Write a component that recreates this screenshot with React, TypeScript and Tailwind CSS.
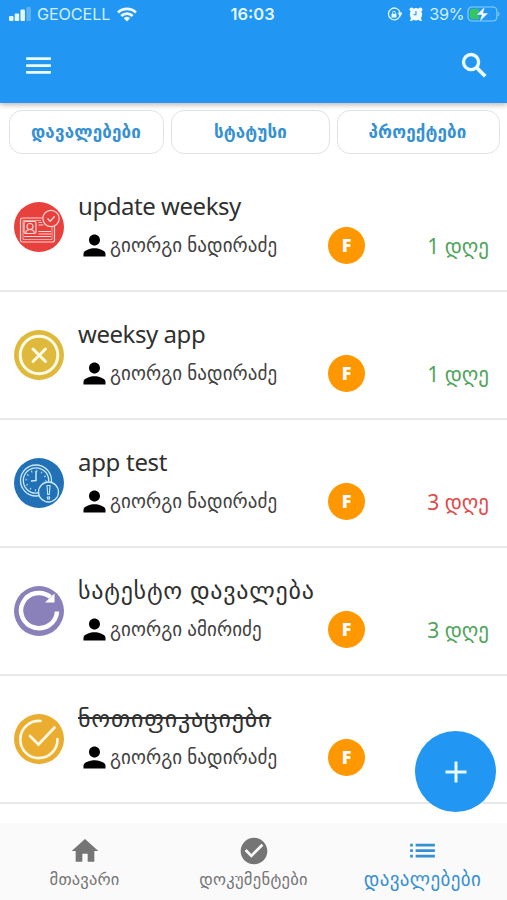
import React from 'react';
import { MdMenu, MdPerson, MdHome, MdCheckCircle, MdList, MdAdd } from 'react-icons/md';
import clsx from 'clsx';

type TaskStatus = 'document' | 'cancelled' | 'overdue' | 'repeat' | 'done';

interface Task {
  id: number;
  title: string;
  titleClass: string;
  user: string;
  days?: string;
  late?: boolean;
  status: TaskStatus;
}

const tasks: Task[] = [
  { id: 1, title: 'update weeksy', titleClass: 'tracking-[-0.45px]', user: 'გიორგი ნადირაძე', days: '1 დღე', status: 'document' },
  { id: 2, title: 'weeksy app', titleClass: 'tracking-[-0.45px]', user: 'გიორგი ნადირაძე', days: '1 დღე', status: 'cancelled' },
  { id: 3, title: 'app test', titleClass: 'tracking-[-0.3px]', user: 'გიორგი ნადირაძე', days: '3 დღე', late: true, status: 'overdue' },
  { id: 4, title: 'სატესტო დავალება', titleClass: 'tracking-[0.75px]', user: 'გიორგი ამირიძე', days: '3 დღე', status: 'repeat' },
  { id: 5, title: 'ნოთიფიკაციები', titleClass: 'tracking-[0.8px] line-through decoration-2', user: 'გიორგი ნადირაძე', status: 'done' },
];

const StatusIcon = ({ status }: { status: TaskStatus }) => {
  switch (status) {
    case 'document':
      return (
        <svg viewBox="0 0 50 50" className="size-[50px]" fill="none" stroke="#ffd5d2" strokeWidth="1.2">
          <circle cx="25" cy="25" r="25" fill="#e8403c" stroke="none" />
          <rect x="6.500" y="16" width="34" height="24" rx="2" />
          <path d="M38 24v13.500H9V18.500h18" strokeWidth=".7" />
          <rect x="10" y="19.500" width="12" height="12" rx="1.500" />
          <circle cx="16" cy="24.500" r="3" />
          <path d="M12 31v-1.500q1-2 4-2t4 2V31M24.500 20.500H28M24.500 23h5M24.500 29.500H37M24.500 32H37M10 34.500h27" />
          <circle cx="37" cy="16.500" r="8.200" fill="#e8403c" />
          <path d="m33.500 16.500 2.700 2.700 4.500-5" strokeWidth="1.500" />
        </svg>
      );
    case 'cancelled':
      return (
        <svg viewBox="0 0 50 50" className="size-[50px]" fill="none" stroke="#fffbe6">
          <circle cx="25" cy="25" r="25" fill="#dfb93b" stroke="none" />
          <circle cx="25" cy="25" r="18.800" strokeWidth="3" />
          <path d="m19 19 12.500 12.500M31.500 19 19 31.500" strokeWidth="3" strokeLinecap="round" />
        </svg>
      );
    case 'overdue':
      return (
        <svg viewBox="0 0 50 50" className="size-[50px]" fill="none" stroke="#c9e9fa" strokeWidth="1.300">
          <circle cx="25" cy="25" r="25" fill="#2271b7" stroke="none" />
          <circle cx="22" cy="22.500" r="15.500" />
          <circle cx="22" cy="22.500" r="12.700" />
          <path d="M22 13v9.500l-5 .5" strokeWidth="1.500" />
          <circle cx="22" cy="22.500" r="9.800" strokeWidth="1.800" strokeDasharray="1 4.131" />
          <circle cx="34.500" cy="34" r="10" fill="#2271b7" />
          <path d="M33 27.500h3l-.7 9h-1.600zM33.500 39h2v2h-2z" strokeWidth="1.100" />
        </svg>
      );
    case 'repeat':
      return (
        <svg viewBox="0 0 50 50" className="size-[50px]" fill="none" stroke="#fff">
          <circle cx="25" cy="25" r="25" fill="#8a80ba" stroke="none" />
          <path d="M43 25.500A18 17.600 0 1 1 36.500 11" strokeWidth="4.500" />
          <path d="M40.500 7.500v9H31z" fill="#fff" stroke="none" />
        </svg>
      );
    case 'done':
      return (
        <svg viewBox="0 0 50 50" className="size-[50px]" fill="none" stroke="#fff8e4" strokeWidth="2.700">
          <circle cx="25" cy="25" r="25" fill="#ebad2f" stroke="none" />
          <path d="M26.500 7A18.600 18.600 0 1 0 43.500 25" strokeLinecap="round" />
          <path d="m16 22 8.500 8.500L40.500 13.500" strokeLinecap="round" />
        </svg>
      );
  }
};

const StatusBar = () => (
  <div className="flex h-7 items-center pr-[7px] pl-[9px] text-[#cfefff]">
    <svg viewBox="0 0 23 14" className="h-[14px] w-[23px]" fill="#e4f7ff">
      <rect x="0" y="9" width="4.500" height="5" rx="1" />
      <rect x="5.700" y="6.500" width="4.500" height="7.500" rx="1" />
      <rect x="11.500" y="2.500" width="4.500" height="11.500" rx="1" />
      <rect x="17.500" y="0" width="4.500" height="14" rx="1" opacity=".3" />
    </svg>
    <span className="ml-[5px] w-[77px] text-[16.200px] whitespace-nowrap tracking-[-0.1px]">GEOCELL</span>
    <svg viewBox="0 0 20 15" className="ml-[3px] h-[15px] w-5" fill="none" stroke="#f0fbff" strokeWidth="2.800">
      <path d="M1 5.500a13 13 0 0 1 18 0M4.300 9a8.200 8.200 0 0 1 11.400 0" />
      <path d="m10 14.500-3.200-3.300a4.800 4.800 0 0 1 6.400 0z" fill="#f0fbff" stroke="none" />
    </svg>
    <span className="ml-[94px] w-[46px] text-[16.500px] font-semibold whitespace-nowrap text-[#e2f6ff]">16:03</span>
    <svg viewBox="0 0 16 16" className="ml-[111px] size-[15px]" fill="none" stroke="#dff6ff" strokeWidth="1.400">
      <path d="M13.800 9.500A6.300 6.300 0 1 1 14 6M12.500 6.500h3.200L14 9.500z" />
      <path d="M4.800 7.300h5.400v4H4.800z" fill="#dff6ff" stroke="none" />
      <path d="M6 7.500V6a1.500 1.500 0 0 1 3 0v1.500" strokeWidth="1" />
    </svg>
    <svg viewBox="0 0 14 14" className="ml-[7px] size-[14px]" fill="#f0fbff">
      <circle cx="7" cy="7.300" r="6.200" />
      <circle cx="2.500" cy="2.500" r="2" />
      <circle cx="11.500" cy="2.500" r="2" />
      <path d="m2 11-1 3h2l2-2zM12 11l1 3h-2l-2-2z" />
      <path d="M7 4v3.700H4.500" fill="none" stroke="#2196f3" strokeWidth="1.100" />
    </svg>
    <span className="ml-[6px] w-[37px] text-[16.200px] tracking-[-0.3px] whitespace-nowrap">39%</span>
    <svg viewBox="0 0 33 18" className="ml-px h-[18px] w-[33px]">
      <rect x="1" y="2" width="29" height="14" rx="4" fill="none" stroke="#8ad0ff" strokeWidth="1.200" />
      <path d="M5 4h7v10H5a2 2 0 0 1-2-2V6a2 2 0 0 1 2-2z" fill="#36c759" />
      <path d="M31.500 7q1.500 2 0 4" fill="none" stroke="#8ad0ff" />
      <path d="M18 1.500 9.500 10h5.200L12.500 17l9-9h-5.200z" fill="#fff" stroke="#2196f3" strokeWidth=".5" />
    </svg>
  </div>
);

const TaskRow = ({ task }: { task: Task }) => (
  <li className="flex h-32 border-b-2 border-[#e8e8e8] pl-[14px]">
    <div className="mt-[38px] h-[50px] w-[50px] shrink-0">
      <StatusIcon status={task.status} />
    </div>
    <div className="ml-[14px] w-[250px] shrink-0 pt-6">
      <div className="flex h-9 items-center whitespace-nowrap">
        <span className={clsx('text-[24px] leading-9 text-[#303030]', task.titleClass)}>{task.title}</span>
      </div>
      <div className="mt-[5px] flex h-8 items-center">
        <MdPerson className="size-[33px] shrink-0 text-black" />
        <span className="-ml-px text-[19px] leading-8 tracking-[0.08px] whitespace-nowrap text-[#424242]">{task.user}</span>
      </div>
    </div>
    <div className="mt-[63px] flex size-[37px] shrink-0 items-center justify-center rounded-full bg-[#ff9800] font-['Open_Sans'] text-[18px] font-extrabold text-white">
      F
    </div>
    {task.days && (
      <div className={clsx('mt-[66px] ml-auto pr-[18px] text-[21px] leading-8 whitespace-nowrap', task.late ? 'text-[#e04b4b]' : 'text-[#51a45b]')}>
        {task.days}
      </div>
    )}
  </li>
);

const App = () => {
  return (
    <div className="relative flex h-[900px] w-[507px] flex-col overflow-hidden bg-white font-['Noto_Sans','DejaVu_Sans',sans-serif]">
      <header className="z-10 h-[103px] shrink-0 bg-[#2196f3] font-['Inter',sans-serif] shadow-[0_2px_5px_rgba(80,50,40,0.35)]">
        <StatusBar />
        <div className="flex h-[75px] items-center justify-between pr-4 pl-[22px] text-[#edfcff]">
          <MdMenu className="size-[33px]" />
          <svg viewBox="0 0 24 24" className="size-[33px]" fill="none" stroke="currentColor" strokeWidth="2.400">
            <circle cx="9.500" cy="9.500" r="5.500" />
            <path d="m13.700 13.700 6.100 6.100" strokeWidth="2.700" />
          </svg>
        </div>
      </header>

      <div className="flex h-[61px] shrink-0 gap-[7px] pt-[7px] pl-[9px] text-[17px] font-bold tracking-[0.15px] text-[#3790d2]">
        <button className="h-[44px] w-[155px] rounded-[13px] border-[1.500px] border-[#e2e2e2] pr-px">დავალებები</button>
        <button className="h-[44px] w-[159px] rounded-[13px] border-[1.500px] border-[#e2e2e2]">სტატუსი</button>
        <button className="h-[44px] w-[163px] rounded-[13px] border-[1.500px] border-[#e2e2e2] pr-0.5">პროექტები</button>
      </div>

      <ul className="h-[659px] shrink-0">
        {tasks.map((task) => (
          <TaskRow key={task.id} task={task} />
        ))}
      </ul>

      <nav className="grid h-[77px] shrink-0 grid-cols-3 bg-[#fafafa] text-[#757575]">
        <div className="flex flex-col items-center pt-3">
          <MdHome className="size-8" />
          <span className="text-[16.500px] leading-6 tracking-[0.15px] whitespace-nowrap">მთავარი</span>
        </div>
        <div className="flex flex-col items-center pt-3">
          <MdCheckCircle className="size-8" />
          <span className="text-[16.500px] leading-6 tracking-[0.3px] whitespace-nowrap">დოკუმენტები</span>
        </div>
        <div className="flex flex-col items-center pt-[11px] text-[#3790d2]">
          <MdList className="size-[33px]" />
          <span className="text-[19px] leading-6 tracking-[0.4px] whitespace-nowrap">დავალებები</span>
        </div>
      </nav>

      <button className="absolute top-[731px] left-[415px] flex size-[81px] items-center justify-center rounded-full bg-[#2196f3] text-[#e8f9ff]">
        <MdAdd className="size-9" />
      </button>
    </div>
  );
};

export default App;
